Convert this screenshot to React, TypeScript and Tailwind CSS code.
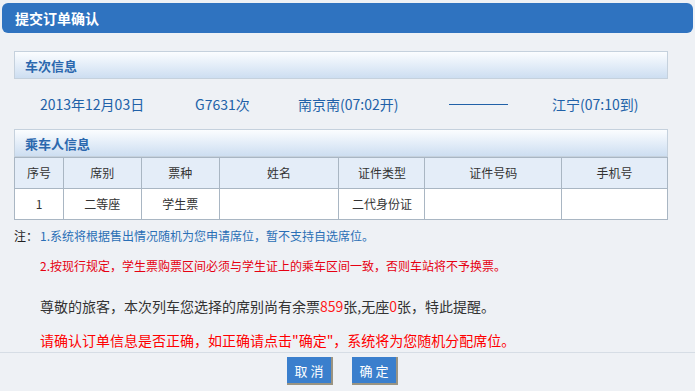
import React from "react";

const font = { fontFamily: '"Noto Sans CJK SC", "Noto Sans", sans-serif' };

function SectionHeader({ title }: { title: string }) {
  return (
    <div className="h-[28px] border border-[#c5d1dd] bg-gradient-to-b from-[#fbfdff] to-[#cddef1] flex items-center pl-[10px]">
      <span className="text-[13px] font-bold text-[#2b68ae] leading-none">{title}</span>
    </div>
  );
}

export default function App() {
  const cols = [49, 78, 78, 120, 86, 137, 106];
  const heads = ["序号", "席别", "票种", "姓名", "证件类型", "证件号码", "手机号"];
  const row = ["1", "二等座", "学生票", "", "二代身份证", "", ""];
  return (
    <div className="w-[695px] h-[391px] bg-[#eef1f5] overflow-hidden flex flex-col" style={font}>
      <div className="mt-[3px] mx-[2px] h-[30px] rounded-[6px] bg-[#2f73c0] flex items-center pl-[13px]">
        <span className="text-white text-[14px] font-bold leading-none">提交订单确认</span>
      </div>

      <div className="mx-[14px] mt-[18px] w-[654px]">
        <SectionHeader title="车次信息" />
        <div className="h-[50px] flex items-center pl-[26px] text-[14px] text-[#2161a8]">
          <span className="w-[155px]">2013年12月03日</span>
          <span className="w-[103px]">G7631次</span>
          <span className="w-[151px]">南京南(07:02开)</span>
          <span className="w-[59px] h-[1px] bg-[#2161a8]"></span>
          <span className="ml-[44px]">江宁(07:10到)</span>
        </div>
        <SectionHeader title="乘车人信息" />
        <table className="border-collapse table-fixed text-[12px] text-[#333]">
          <colgroup>
            {cols.map((w, i) => (
              <col key={i} style={{ width: w }} />
            ))}
          </colgroup>
          <tbody>
            <tr className="h-[31px] bg-[#e4edf8]">
              {heads.map((h, i) => (
                <td key={i} className="border border-[#a9b6c3] text-center p-0">
                  {h}
                </td>
              ))}
            </tr>
            <tr className="h-[31px] bg-white">
              {row.map((h, i) => (
                <td key={i} className="border border-[#a9b6c3] text-center p-0">
                  {h}
                </td>
              ))}
            </tr>
          </tbody>
        </table>
      </div>

      <div className="mt-[8px] pl-[14px] text-[12px] leading-[16px] flex">
        <span className="text-[#222] w-[26px]">注：</span>
        <span className="text-[#2a6fb6]">1.系统将根据售出情况随机为您申请席位，暂不支持自选席位。</span>
      </div>
      <div className="mt-[14px] pl-[40px] text-[12px] leading-[16px] text-[#e60012]">
        2.按现行规定，学生票购票区间必须与学生证上的乘车区间一致，否则车站将不予换票。
      </div>
      <div className="mt-[23px] pl-[40px] text-[14px] leading-[18px] text-[#333]">
        尊敬的旅客，本次列车您选择的席别尚有余票<span className="text-[#ff1a1a]">859</span>张,无座
        <span className="text-[#ff1a1a]">0</span>张，特此提醒。
      </div>
      <div className="mt-[16px] pl-[40px] text-[14px] leading-[18px] text-[#ff0000]">
        请确认订单信息是否正确，如正确请点击"确定"，系统将为您随机分配席位。
      </div>

      <div className="mt-[3px] border-t border-[#d6dde5] flex-1 flex justify-center items-start pt-[4px] pr-[10px] gap-[19px]">
        <button className="w-[46px] h-[28px] bg-[#3a7fcd] border-r-2 border-b-2 border-[#9a9482] text-white text-[13px] tracking-[3px] pl-[3px] leading-none">
          取消
        </button>
        <button className="w-[46px] h-[28px] bg-[#3a7fcd] border-r-2 border-b-2 border-[#9a9482] text-white text-[13px] tracking-[3px] pl-[3px] leading-none">
          确定
        </button>
      </div>
    </div>
  );
}
